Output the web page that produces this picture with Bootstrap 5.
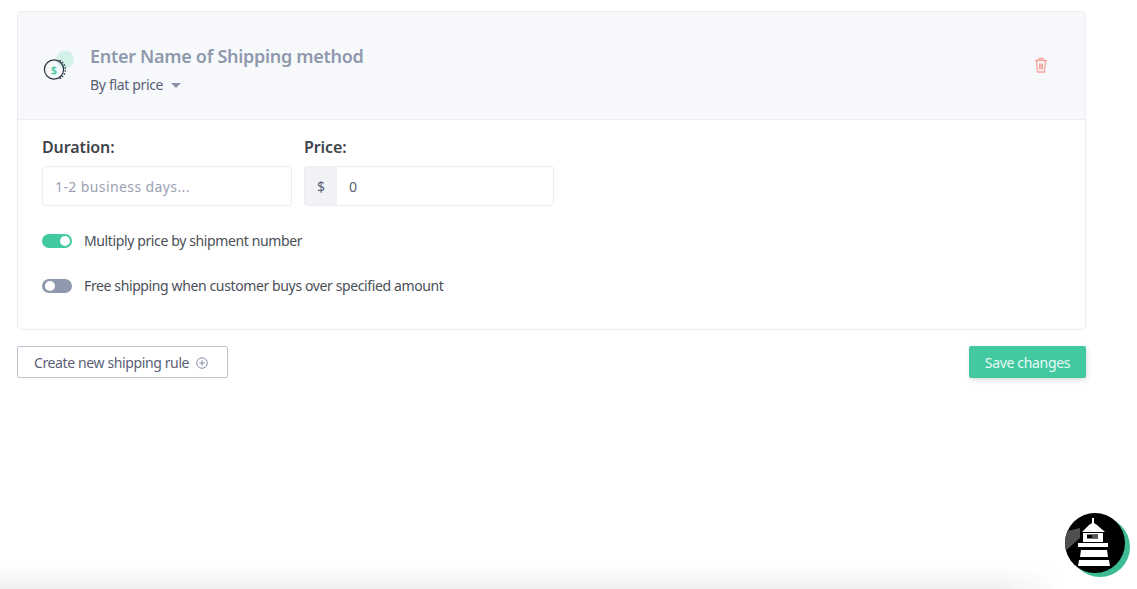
<!DOCTYPE html>
<html lang="en">
<head>
<meta charset="utf-8">
<title>Shipping</title>
<link href="https://cdn.jsdelivr.net/npm/bootstrap@5.3.0/dist/css/bootstrap.min.css" rel="stylesheet">
<style>
html,body{height:100%;overflow:hidden}
body{font-family:"Noto Sans",sans-serif;font-size:14px;color:#4a4f57;background:#fff;position:relative}
.pg{padding:11px 51px 0 17px}
.rule-card{border:1px solid #ebedf0;border-radius:4px;height:319px;background:#fff}
.rule-head{height:108px;background:repeating-conic-gradient(#f5f6f9 0 25%,#fafbfc 0 50%) 0 0/2px 2px;border-bottom:1px solid #ebedf0;border-radius:4px 4px 0 0;padding:0 37px 0 24px}
.ico{width:32px;height:34px;flex:none;margin-right:16px}
.name-wrap{margin-top:8px}
.name{font-size:18px;font-weight:600;color:#8f99ad;line-height:24px;letter-spacing:-.3px}
.kind{font-size:14px;color:#596075;margin-top:7px;line-height:20px;letter-spacing:-.33px}
.caret-d{display:inline-block;border:5px solid transparent;border-top:5px solid #8b93a7;border-bottom:0;margin-left:8px;vertical-align:2px}
.trash{margin-bottom:2px}
.rule-body{padding:14px 24px 0}
.fld{width:250px;margin-right:12px}
.fld label{display:block;font-weight:600;font-size:16px;color:#3f444b;line-height:24px;margin-bottom:7px;letter-spacing:-.1px;padding-top:1px}
.ipt{height:40px;border:1px solid #ebedf0;border-radius:3px;font-size:14px;letter-spacing:.4px;padding:1px 12px 0;display:flex;align-items:center;color:#9ba2b4;background:#fff}
.ipt.pr{padding:0;color:#596075}
.dol{width:32px;height:100%;background:repeating-conic-gradient(#eceef1 0 25%,#f6f7f8 0 50%) 0 0/2px 2px;display:flex;align-items:center;justify-content:center;margin-right:12px;border-radius:3px 0 0 3px;letter-spacing:0}
.tog-row{display:flex;align-items:center;font-size:14px;letter-spacing:-.38px;color:#4a4f57;line-height:20px}
.tog-row.one{margin-top:25px}
.tog{width:30px;height:14px;border-radius:7px;flex:none;margin-right:12px;position:relative;background:#8f99ad}
.tog::after{content:"";position:absolute;width:10px;height:10px;border-radius:50%;background:#fff;top:2px;left:3px}
.tog.on{background:#42c9a0}
.tog.on::after{left:auto;right:2px}
.acts{margin-top:16px}
.btn-new{height:32px;width:211px;border:1px solid #bfc3d0;border-radius:2px;font-size:14px;letter-spacing:-.38px;color:#596075;background:#fff;padding:0 0 0 16px;text-align:left}
.btn-new svg{margin-left:7px;vertical-align:-1px}
.btn-save{height:32px;width:117px;border:0;border-radius:2px;font-size:14px;letter-spacing:-.33px;color:#e9fbf5;background:#42c9a0;box-shadow:1px 2px 5px rgba(0,0,0,.14);padding:0}
.fade-foot{position:absolute;left:0;right:75px;bottom:0;height:24px;background:linear-gradient(to bottom,rgba(241,238,241,0),#f1eef1);-webkit-mask-image:linear-gradient(to right,#000 94%,transparent);mask-image:linear-gradient(to right,#000 94%,transparent)}
.logo{position:absolute;left:1063px;top:511px;width:70px;height:70px}
</style>
</head>
<body>
<div class="pg">
  <div class="rule-card">
    <div class="rule-head d-flex align-items-center">
      <svg class="ico" viewBox="0 0 32 34">
        <circle cx="23" cy="10.500" r="9" fill="#d3f1e8"/>
        <circle cx="12" cy="20.500" r="9.600" fill="none" stroke="#2c3444" stroke-width="1.200"/>
        <path d="M16 11.400a10 10 0 0 1 0 18.200" fill="none" stroke="#2c3444" stroke-width="1.400" stroke-dasharray="1.500 1.500" transform="translate(1.500 0)"/>
        <text x="12" y="24.500" text-anchor="middle" font-family="Noto Sans,sans-serif" font-size="11" font-weight="600" fill="#42c9a0">$</text>
      </svg>
      <div class="flex-grow-1 name-wrap">
        <div class="name">Enter Name of Shipping method</div>
        <div class="kind">By flat price<span class="caret-d"></span></div>
      </div>
      <svg class="trash" width="14" height="16" viewBox="0 0 14 16" fill="none" stroke="#f7a59c" stroke-width="1.300">
        <path d="M1 3.500h12M5 3V1.500h4V3M2.500 4l1 11h7l1-11M5.500 6.500v6M7 6.500v6M8.500 6.500v6" />
      </svg>
    </div>
    <div class="rule-body">
      <div class="d-flex">
        <div class="fld">
          <label>Duration:</label>
          <div class="ipt">1-2 business days...</div>
        </div>
        <div class="fld">
          <label>Price:</label>
          <div class="ipt pr"><span class="dol">$</span>0</div>
        </div>
      </div>
      <div class="tog-row one"><span class="tog on"></span>Multiply price by shipment number</div>
      <div class="tog-row one"><span class="tog"></span>Free shipping when customer buys over specified amount</div>
    </div>
  </div>
  <div class="acts d-flex justify-content-between">
    <button class="btn-new" type="button">Create new shipping rule<svg width="12" height="12" viewBox="0 0 13 13" fill="none" stroke="#7d8499" stroke-width="1"><circle cx="6.500" cy="6.500" r="5.700"/><path d="M6.500 3.500v6M3.500 6.500h6"/></svg></button>
    <button class="btn-save" type="button">Save changes</button>
  </div>
</div>
<div class="fade-foot"></div>
<svg class="logo" viewBox="0 0 70 70">
  <defs><clipPath id="dsc"><circle cx="32" cy="32" r="30"/></clipPath></defs>
  <circle cx="37" cy="36" r="30" fill="#3dbb94"/>
  <circle cx="32" cy="32" r="30" fill="#000"/>
  <path d="M0 21 17 17V27L0 42z" fill="#4f4f4f" clip-path="url(#dsc)"/>
  <path fill-rule="evenodd" fill="#fff" d="M29 7h2v5l3 2 8 7H19l7-7 3-2z M20 22h20v9H20z M24 23.500v4h11v-4z M15 32h30v4H15z M18 39h26l1 7H17z M16 49h30l1 6H15z"/>
  <rect x="29" y="23.500" width="6" height="4" fill="#555"/>
</svg>
<script src="https://cdn.jsdelivr.net/npm/bootstrap@5.3.0/dist/js/bootstrap.bundle.min.js"></script>
</body>
</html>
